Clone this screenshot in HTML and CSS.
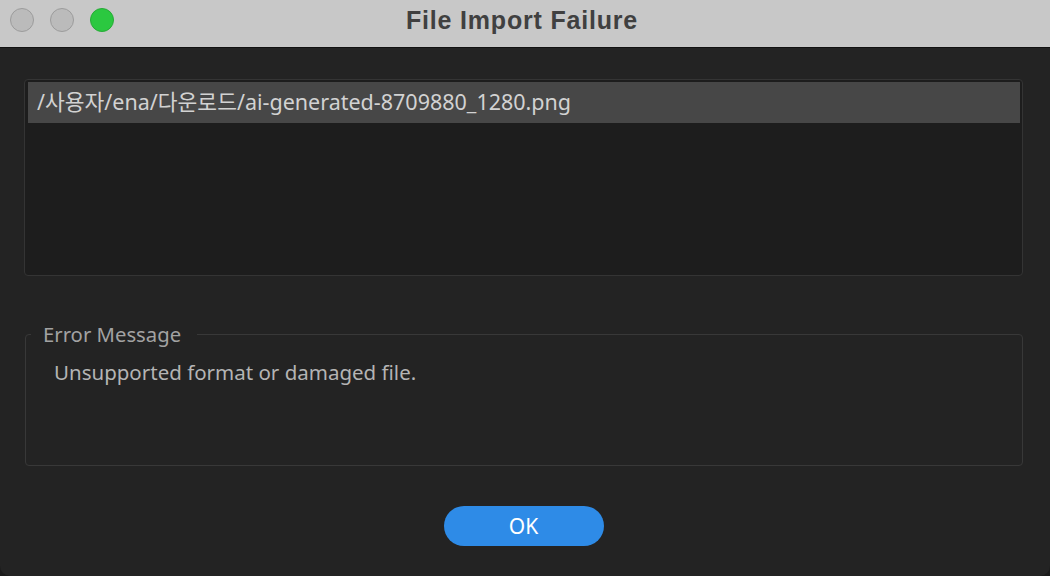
FILE: index.html
```html
<!DOCTYPE html>
<html>
<head>
<meta charset="utf-8">
<link rel="stylesheet" href="styles.css">
</head>
<body>
<div class="window">
  <div class="titlebar">
    <div class="lights">
      <span class="light gray"></span>
      <span class="light gray"></span>
      <span class="light green"></span>
    </div>
    <div class="title">File Import Failure</div>
  </div>
  <div class="content">
    <div class="list">
      <div class="row selected">/사용자/ena/다운로드/ai-generated-8709880_1280.png</div>
    </div>
    <fieldset class="error">
      <legend>Error Message</legend>
      <div class="msg">Unsupported format or damaged file.</div>
    </fieldset>
    <div class="actions">
      <button class="ok">OK</button>
    </div>
  </div>
</div>
</body>
</html>
```
FILE: styles.css
```css
html, body {
  margin: 0;
  padding: 0;
  background: #1a1a1a;
}
body {
  font-family: "Noto Sans", "Noto Sans CJK KR", sans-serif;
}
.window {
  width: 1050px;
  height: 576px;
  background: #232323;
  border-bottom-right-radius: 10px;
  border-bottom-left-radius: 10px;
  overflow: hidden;
  display: flex;
  flex-direction: column;
}
.titlebar {
  height: 47px;
  flex: none;
  background: #c8c8c8;
  border-bottom: 1px solid #121212;
  position: relative;
  display: flex;
  align-items: center;
  justify-content: center;
}
.lights {
  position: absolute;
  left: 10px;
  top: 8px;
  display: flex;
  gap: 16px;
}
.light {
  width: 22px;
  height: 22px;
  border-radius: 50%;
  border: 1px solid #9c9c9c;
  background: #bbbbbb;
}
.light.green {
  background: #2bc840;
  border-color: #27ab37;
}
.title {
  font-family: "Liberation Sans", Arial, sans-serif;
  font-weight: bold;
  font-size: 25px;
  letter-spacing: 0.8px;
  color: #404040;
  margin-left: -6px;
  margin-top: -7px;
}
.content {
  flex: 1;
  padding: 31px 27px 0 24px;
  display: flex;
  flex-direction: column;
}
.list {
  height: 191px;
  border: 1px solid #343434;
  border-radius: 4px;
  background: #1d1d1d;
  padding: 2px 2px 2px 3px;
}
.row {
  height: 41px;
  line-height: 40px;
  padding-left: 9px;
  font-size: 21.5px;
  color: #d2d2d2;
}
.row.selected {
  background: #474747;
}
.error {
  margin: 46px 0 0 1px;
  border: 1px solid #383838;
  border-radius: 4px;
  padding: 0 0 0 5px;
  height: 144px;
  box-sizing: border-box;
  min-width: 0;
}
.error legend {
  padding: 0 16px 0 12px;
  font-size: 20.3px;
  color: #a2a2a2;
  line-height: 24px;
}
.msg {
  font-size: 20.5px;
  color: #b4b4b4;
  padding-left: 23px;
  margin-top: 12px;
  line-height: 28px;
}
.actions {
  display: flex;
  justify-content: center;
  margin-top: 40px;
}
.ok {
  width: 160px;
  height: 40px;
  border: none;
  border-radius: 20px;
  background: #2e8be7;
  color: #ffffff;
  font-family: "Noto Sans", sans-serif;
  font-size: 21px;
  padding: 0;
}
```
